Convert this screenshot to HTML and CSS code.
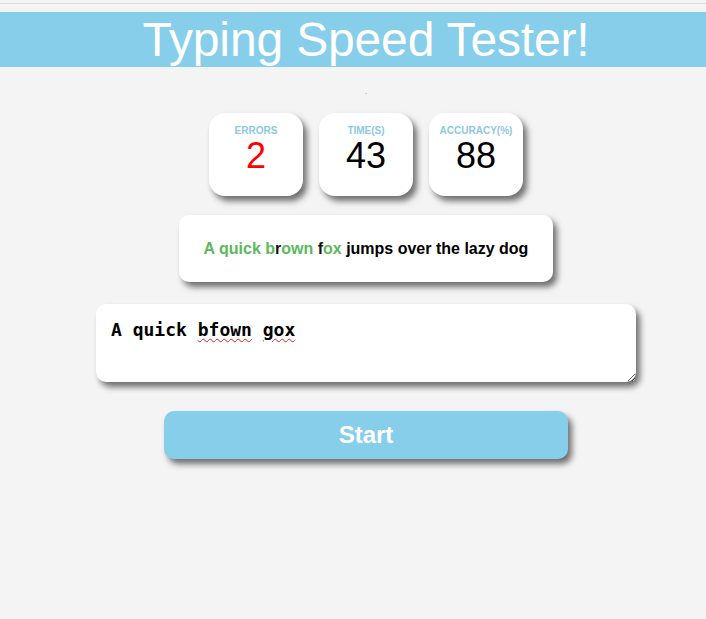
FILE: index.html
```html
<!DOCTYPE html>
<html lang="en">
<head>
<meta charset="utf-8">
<title>Typing Speed Tester!</title>
<link rel="stylesheet" href="styles.css">
</head>
<body>
<div class="page">
  <div class="topline"></div>
  <header class="banner">
    <h1 class="title">Typing Speed Tester!</h1>
  </header>
  <div class="status">.</div>
  <section class="stats">
    <div class="card">
      <div class="label">ERRORS</div>
      <div class="value value-error">2</div>
    </div>
    <div class="card">
      <div class="label">TIME(S)</div>
      <div class="value">43</div>
    </div>
    <div class="card">
      <div class="label">ACCURACY(%)</div>
      <div class="value">88</div>
    </div>
  </section>
  <div class="quote"><span class="ok">A quick b</span><span class="bad">r</span><span class="ok">own </span><span class="bad">f</span><span class="ok">ox</span> jumps over the lazy dog</div>
  <div class="input" role="textbox" contenteditable="true" spellcheck="true">A quick <span class="misspelt">bfown</span> <span class="misspelt">gox</span></div>
  <button class="start" type="button">Start</button>
</div>
</body>
</html>
```

FILE: styles.css
```css
html {
  overflow: hidden;
  background: #f4f4f4;
}

body {
  margin: 0;
  padding: 0;
  background: #f4f4f4;
}

.page {
  width: 732px;
  padding-bottom: 40px;
  display: flex;
  flex-direction: column;
  align-items: center;
  font-family: "Liberation Sans", Arial, sans-serif;
}

.topline {
  align-self: stretch;
  height: 0;
  margin-top: 3px;
  border-top: 1px solid #dcdcdc;
}

.banner {
  align-self: stretch;
  margin-top: 8px;
  height: 55px;
  background: #87ceeb;
  display: flex;
  justify-content: center;
}

.title {
  margin: 0;
  font-weight: normal;
  font-size: 48px;
  line-height: 55px;
  letter-spacing: -0.15px;
  color: #ffffff;
}

.status {
  margin-top: 21px;
  height: 8px;
  font-size: 8px;
  line-height: 8px;
  color: #888;
}

.stats {
  margin-top: 17px;
  display: flex;
  gap: 16px;
}

.card {
  width: 94px;
  height: 83px;
  box-sizing: border-box;
  padding-top: 12px;
  background: #fff;
  border-radius: 16px;
  box-shadow: 4px 5px 6px rgba(0, 0, 0, 0.55);
  text-align: center;
}

.label {
  font-size: 10px;
  line-height: 11px;
  font-weight: bold;
  color: #8cc8e2;
}

.value {
  font-size: 36px;
  line-height: 39px;
  color: #000;
}

.value-error {
  color: #ff0000;
}

.quote {
  margin-top: 19px;
  width: 374px;
  height: 67px;
  box-sizing: border-box;
  background: #fff;
  border-radius: 10px;
  box-shadow: 4px 5px 6px rgba(0, 0, 0, 0.55);
  display: flex;
  align-items: center;
  justify-content: center;
  font-size: 16px;
  font-weight: bold;
  color: #000;
  white-space: pre;
}

.ok {
  color: #5cb85c;
}

.bad {
  color: #111;
}

.input {
  margin-top: 22px;
  width: 540px;
  height: 78px;
  box-sizing: border-box;
  padding: 15px 15px;
  background: #fff;
  border-radius: 10px;
  box-shadow: 4px 5px 6px rgba(0, 0, 0, 0.55);
  font-family: "DejaVu Sans Mono", "Liberation Mono", monospace;
  font-size: 18px;
  line-height: 21px;
  font-weight: bold;
  color: #000;
  overflow: auto;
  resize: both;
  outline: none;
}

.misspelt {
  text-decoration: underline wavy #e02020;
  text-decoration-thickness: 1px;
  text-underline-offset: 2px;
}

.start {
  margin-top: 29px;
  width: 404px;
  height: 48px;
  border: none;
  border-radius: 10px;
  background: #87ceeb;
  box-shadow: 4px 5px 6px rgba(0, 0, 0, 0.55);
  font-family: "Liberation Sans", Arial, sans-serif;
  font-size: 24px;
  font-weight: bold;
  color: #fff;
  cursor: pointer;
}
```
